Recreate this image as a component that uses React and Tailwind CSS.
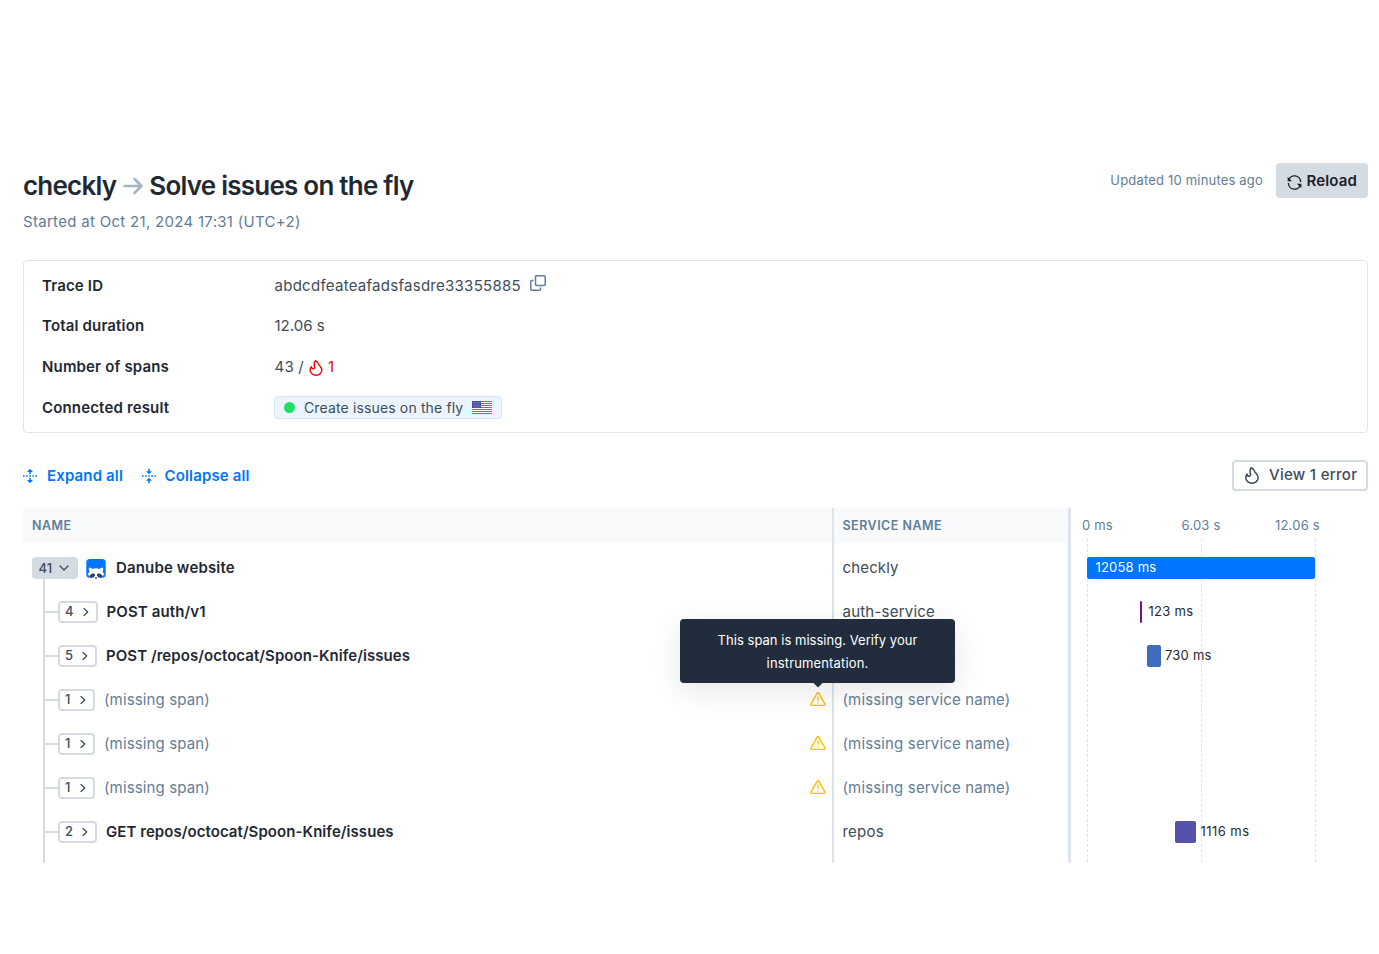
import React from "react";

const spans = [
  { count: "4", name: "POST auth/v1", service: "auth-service", gap: "ml-[8.500px]", box: "w-[40px]", track: "tracking-[.12px]" },
  { count: "5", name: "POST /repos/octocat/Spoon-Knife/issues", service: "", gap: "ml-[9px]", box: "w-[39px]", track: "tracking-[.06px]" },
  { count: "1", missing: true, gap: "ml-[9px]", box: "w-[37px]" },
  { count: "1", missing: true, gap: "ml-[9px]", box: "w-[37px]" },
  { count: "1", missing: true, gap: "ml-[9px]", box: "w-[37px]" },
  { count: "2", name: "GET repos/octocat/Spoon-Knife/issues", service: "repos", gap: "ml-[9px]", box: "w-[39px]", track: "tracking-[.06px]" },
];

function Flame({ className }) {
  return (
    <svg viewBox="0 0 14 17" className={className} fill="none" stroke="currentColor" strokeWidth="1.500" strokeLinejoin="round" strokeLinecap="round">
      <path d="M6.300.8C8.800 1.600 9 3.600 10 5C11.600 6.900 13.200 8.200 13.200 10.700C13.200 13.900 10.400 16.200 7 16.200C3.600 16.200.8 13.900.8 10.700C.8 9.200 1.200 8 2 7.100C2.200 8.500 2.900 9.300 4 9.300C5.300 9.300 5.900 8.300 5.500 7C4.900 5 4.700 2.500 6.300.8Z" />
    </svg>
  );
}

function Warning() {
  return (
    <svg viewBox="0 0 16 16" className="mb-[2px] h-4 w-4 text-[#fbbf13]" fill="none" stroke="currentColor" strokeWidth="1.400" strokeLinejoin="round" strokeLinecap="round">
      <path d="M7.300 1.900a.8.8 0 0 1 1.400 0l6.300 11.300a.8.8 0 0 1-.7 1.200H1.700a.8.8 0 0 1-.7-1.200z" />
      <path d="M8 6v3.300M8 11.600v.1" />
    </svg>
  );
}

function FoldIcon({ collapse }) {
  return (
    <svg viewBox="0 0 14 16" className="mt-px h-4 w-[14px]" fill="none" stroke="currentColor" strokeWidth="1.500">
      <path d="M0 8h14" strokeDasharray="1.600 1.500" />
      {collapse ? (
        <>
          <path d="M7 .8v3M7 15.200v-3" />
          <path d="M4 3.200h6L7 6.200zM4 12.800h6L7 9.800z" fill="currentColor" stroke="none" />
        </>
      ) : (
        <>
          <path d="M7 6V3M7 10v3" />
          <path d="M4 4h6L7 .8zM4 12h6l-3 3.200z" fill="currentColor" stroke="none" />
        </>
      )}
    </svg>
  );
}

function Flag() {
  return (
    <svg viewBox="0 0 20 13" className="ml-[9px] h-[13px] w-5">
      <path fill="#fff" d="M0 0h20v13H0z" />
      <path stroke="#f0434f" strokeWidth="1" d="M0 .5h20M0 2.500h20M0 4.500h20M0 6.500h20M0 8.500h20M0 10.500h20M0 12.500h20" />
      <path fill="#4a4a9c" d="M0 0h9v7H0z" />
      <path stroke="#a9a9d4" strokeWidth=".7" strokeDasharray=".8 .9" d="M1 1.500h7.500M1.800 3h6.500M1 4.500h7.500M1.800 6h6.500" />
    </svg>
  );
}

function Raccoon() {
  return (
    <svg viewBox="0 0 20 20" className="ml-2 mt-px h-5 w-5">
      <rect width="19.400" height="18.700" x=".3" y="0" rx="3.500" fill="#0075ff" />
      <path fill="#fff" d="M3 8.700c1.500-.2 2.600.3 3.400 1.200q3.600-1.100 7.200 0c.8-.9 1.900-1.400 3.400-1.200.4 1.600.1 2.800-.4 3.900.7 1.300 1.200 2.300 1.900 3.400l-2.200.6-.4 1.400L12 19.500H8L4.100 18l-.4-1.400L1.500 16c.7-1.100 1.200-2.100 1.900-3.400-.5-1.100-.8-2.300-.4-3.900z" />
      <path fill="#1b3a63" d="M3.800 17.500c.4-2.200 2.200-3.300 4.400-2.900l1 1.600-1.500 2.400-2.400.1zM16.200 17.500c-.4-2.200-2.200-3.300-4.400-2.900l-1 1.600 1.500 2.400 2.400.1zM9 18.200h2l-.5 1.800h-1z" />
      <path fill="#fff" d="M6.300 16.700h.9v.6h-.9zM12.800 16.700h.9v.6h-.9z" />
    </svg>
  );
}

function DetailRow({ label, children }) {
  return (
    <div className="flex items-center">
      <div className="w-[232.500px] font-semibold tracking-[.16px] text-[#1f2933]">{label}</div>
      {children}
    </div>
  );
}

function Bar({ offset, width, color, label, gap }) {
  return (
    <div className="flex h-11 items-center">
      <div className={"h-[22px] rounded-[2px] " + color} style={{ marginLeft: offset, width }} />
      <span className={"mb-[2px] text-[13px] text-[#1f2933] " + gap}>{label}</span>
    </div>
  );
}

export default function App() {
  return (
    <div className="h-[954px] w-[1379px] bg-white pl-[23px] pr-[11px] pt-[163px] font-['Inter',sans-serif] text-[15px] leading-5 text-[#3e4c59]">
      <header className="flex h-[97px] justify-between">
        <div>
          <h1 className="flex h-[46px] items-center text-[26px] font-semibold tracking-[-.78px] text-[#1f2933]">
            checkly
            <svg viewBox="0 0 20 18" className="ml-[7px] mr-[6px] h-[18px] w-5 text-[#a3b4c6]" fill="none" stroke="currentColor" strokeWidth="2.500" strokeLinecap="round" strokeLinejoin="round">
              <path d="M1.500 9h17M11.500 2l7 7-7 7" />
            </svg>
            <span className="tracking-[-.76px]">Solve issues on the fly</span>
          </h1>
          <p className="mt-[3px] tracking-[.3px] text-[#627d98]">Started at Oct 21, 2024 17:31 (UTC+2)</p>
        </div>
        <div className="flex h-[35px] items-center">
          <span className="mb-px mr-[13px] text-[13px] tracking-[.19px] text-[#627d98]">Updated 10 minutes ago</span>
          <button className="flex h-[35px] w-[92px] items-center rounded-[4px] bg-[#d5dbe3] pl-[11px] font-semibold tracking-[.15px] text-[#1a202c]">
            <svg viewBox="0 0 16 16" className="mr-[4.500px] mt-[3px] h-[15px] w-[15px]" fill="none" stroke="currentColor" strokeWidth="1.500">
              <path d="M1.700 5.800A6.500 6.500 0 0 1 14.500 7.500M14.300 10.200A6.500 6.500 0 0 1 1.500 8.500" />
              <path d="M.7 2v4.700h4.700zM15.300 14V9.300h-4.700z" fill="currentColor" stroke="none" />
            </svg>
            Reload
          </button>
        </div>
      </header>

      <section className="grid h-[173px] grid-rows-[41px_40px_41px_41px] rounded-[4px] border border-[#e1e5eb] pl-[18px] pt-[4px]">
        <DetailRow label="Trace ID">
          <span className="tracking-[.27px]">abdcdfeateafadsfasdre33355885</span>
          <svg viewBox="0 0 16 16" className="mb-[5px] ml-[9px] h-4 w-4 text-[#627d98]" fill="none" stroke="currentColor" strokeWidth="1.500" strokeLinejoin="round">
            <rect x="5.500" y=".8" width="9.700" height="9.700" rx="1" />
            <path d="M3.500 5.500H1.800a1 1 0 0 0-1 1v7.700a1 1 0 0 0 1 1h7.700a1 1 0 0 0 1-1v-1.700" />
          </svg>
        </DetailRow>
        <DetailRow label="Total duration">12.06 s</DetailRow>
        <DetailRow label="Number of spans">
          <span className="tracking-[.2px]">43 /</span>
          <Flame className="ml-[5px] mr-[5px] mt-[2px] h-[16px] w-[14px] text-[#f00505]" />
          <span className="text-[#f00505]">1</span>
        </DetailRow>
        <DetailRow label="Connected result">
          <a className="-ml-px flex h-[23px] w-[228px] items-center rounded-[4px] border border-[#d3e7fc] bg-[#ebf4ff] pl-[9px] text-[14px] tracking-[.14px]">
            <span className="mr-[9.500px] h-[11px] w-[11px] rounded-full bg-[#22dd66]" />
            Create issues on the fly
            <Flag />
          </a>
        </DetailRow>
      </section>

      <div className="flex h-[75px] items-center justify-between pt-[10px]">
        <div className="flex items-center font-semibold tracking-[.15px] text-[#0075ff]">
          <FoldIcon />
          <span className="ml-[10px] mr-[18.500px]">Expand all</span>
          <FoldIcon collapse />
          <span className="ml-[9px]">Collapse all</span>
        </div>
        <button className="flex h-[31px] w-[136px] items-center rounded-[4px] border-2 border-[#d5dbe3] pl-[10px] font-medium tracking-[.29px] text-[#3e4c59]">
          <Flame className="mr-[9px] h-[17px] w-4" />
          <span className="pb-px">View 1 error</span>
        </button>
      </div>

      <div className="flex h-[355px]">
        <div className="relative w-[809px]">
          <div className="flex h-[35px] items-center bg-[#f8fafc] pl-[9px] text-[12.500px] font-semibold tracking-[.5px] text-[#627d98]">NAME</div>
          <div className="absolute left-[20px] top-[71px] h-[284px] w-[2px] bg-[#d5dbe3]" />
          <div className="pt-[3px]">
            <div className="flex h-11 items-center pl-[9px]">
              <span className="flex h-[22px] w-[46px] items-center rounded-[4px] bg-[#d5dbe3] pl-[6.500px] text-[13px] font-medium">
                <span className="pb-px">41</span>
                <svg viewBox="0 0 10 6" className="ml-[6.500px] h-[6px] w-[10px]" fill="none" stroke="currentColor" strokeWidth="1.300" strokeLinecap="round" strokeLinejoin="round"><path d="M1 1l4 4 4-4" /></svg>
              </span>
              <Raccoon />
              <span className="ml-[10px] font-semibold tracking-[.15px] text-[#1f2933]">Danube website</span>
            </div>
            {spans.map((s, i) => (
              <div key={i} className="flex h-11 items-center pl-[22px]">
                <span className="h-[2px] w-[13px] bg-[#d5dbe3]" />
                <span className={"flex h-[22px] items-center justify-between rounded-[4px] border-2 border-[#d5dbe3] pl-[5px] pr-[7px] text-[13px] font-medium " + s.box}>
                  <span className="pb-[2px]">{s.count}</span>
                  <svg viewBox="0 0 6 8" className="h-2 w-[6px]" fill="none" stroke="currentColor" strokeWidth="1.300" strokeLinecap="round" strokeLinejoin="round"><path d="M1 .6L4.700 4 1 7.400" /></svg>
                </span>
                {s.missing ? (
                  <>
                    <span className={"flex-1 tracking-[.14px] text-[#627d98] " + s.gap}>(missing span)</span>
                    <span className="mr-[6px]"><Warning /></span>
                  </>
                ) : (
                  <span className={"font-semibold text-[#1f2933] " + s.gap + " " + s.track}>{s.name}</span>
                )}
              </div>
            ))}
          </div>
          <div className="absolute left-[657px] top-[111px] z-10 flex h-[64px] w-[275px] flex-col items-center justify-center rounded-[4px] bg-[#212d3d] pt-[2px] text-center text-[13px] leading-[23px] tracking-[.03px] text-white shadow-[0_8px_30px_rgba(0,0,0,.1)]">
            <span>This span is missing. Verify your</span>
            <span className="tracking-[.15px]">instrumentation.</span>
            <svg viewBox="0 0 10 5" className="absolute left-[132.500px] top-[63px] h-[6px] w-[10px]"><path d="M0 0h10L5 5z" fill="#212d3d" /></svg>
          </div>
        </div>

        <div className="w-[236px] border-l-2 border-[#dde3ea]">
          <div className="flex h-[35px] items-center bg-[#f8fafc] pl-[8.500px] text-[12.500px] font-semibold tracking-[.48px] text-[#627d98]">SERVICE NAME</div>
          <div className="pl-[8.500px] pt-[3px] tracking-[.15px]">
            <div className="flex h-11 items-center">checkly</div>
            {spans.map((s, i) => (
              <div key={i} className={"flex h-11 items-center " + (s.missing ? "text-[#627d98]" : "tracking-[.22px]")}>
                {s.missing ? "(missing service name)" : s.service}
              </div>
            ))}
          </div>
        </div>

        <div className="relative flex-1 border-l-[3px] border-[#dfe5ec]">
          <svg viewBox="0 0 240 324" className="absolute left-[16px] top-[31px] h-[324px] w-[240px]" stroke="#e2e3e5" strokeDasharray="3 2">
            <path d="M.5 0v324M114.500 0v324M228.500 0v324" />
          </svg>
          <div className="relative flex h-[38px] items-center pb-[4px] text-[13px] tracking-[.2px] text-[#627d98]">
            <span className="ml-[11px] w-[99.500px]">0 ms</span>
            <span className="w-[93.500px]">6.03 s</span>
            <span>12.06 s</span>
          </div>
          <div className="relative">
            <div className="flex h-11 items-center pl-[16px]">
              <div className="h-[22px] w-[228px] rounded-[2px] bg-[#0075ff] pl-[8.500px] text-[13px] leading-[21px] tracking-[.2px] text-white">12058 ms</div>
            </div>
            <Bar offset={69} width={2} color="bg-[#6b1a8f]" label="123 ms" gap="ml-[6.500px] tracking-[.28px]" />
            <Bar offset={76} width={14} color="bg-[#406cbf]" label="730 ms" gap="ml-[4px] tracking-[.22px]" />
            <div className="h-[132px]" />
            <Bar offset={104} width={21} color="bg-[#5552ac]" label="1116 ms" gap="ml-[4.500px] tracking-[.45px]" />
          </div>
        </div>
      </div>
    </div>
  );
}
